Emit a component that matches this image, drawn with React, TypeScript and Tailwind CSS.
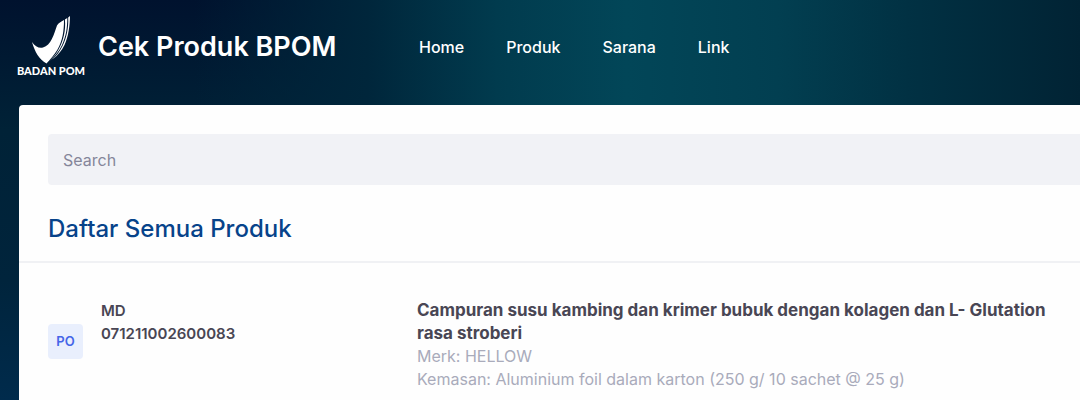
const links = ["Home", "Produk", "Sarana", "Link"];

const products = [
  {
    code: "PO",
    type: "MD",
    number: "071211002600083",
    name: "Campuran susu kambing dan krimer bubuk dengan kolagen dan L- Glutation rasa stroberi",
    brand: "HELLOW",
    packaging: "Aluminium foil dalam karton (250 g/ 10 sachet @ 25 g)",
  },
];

function Logo() {
  return (
    <div className="flex w-16 flex-col items-center">
      <svg viewBox="0 0 40 48" className="h-12 w-10" fill="#fff" aria-hidden="true">
        <path d="M1 26C4 30.500 8 32.500 12 31.500C20 29.500 23 18 26 9.500C27.500 7 30 5.500 33 4C33 15 31.500 25 26.500 33.500C23 39.500 19.500 43 15.500 47.500C8 43.500 4 36 1 26Z" />
        <path d="M33.900 3.500C35 14 32.500 25 27.500 33.500C24.500 39 21.500 42 18 45.500C23.500 41 27.800 35.500 30.800 29.500C35 20.500 36.300 12 36.300 2Z" />
        <path d="M37.200 1.500C37.700 12 35.500 22 31.500 30C28.500 36 25.500 39.500 21.500 43.500C27 39 30.500 35 33.500 29C37.500 20.500 38.800 10 39 0Z" />
      </svg>
      <span className="font-['Lato'] text-[11px] font-black leading-[14px] whitespace-nowrap">
        BADAN POM
      </span>
    </div>
  );
}

function Header() {
  return (
    <header className="flex items-center pt-4 pb-[27px] pl-[19px] text-white">
      <Logo />
      <h1 className="ml-[15px] w-[321px] text-[27px] font-semibold whitespace-nowrap">
        Cek Produk BPOM
      </h1>
      <nav className="flex gap-[42px] text-base font-medium">
        {links.map((link) => (
          <a key={link} href="#">
            {link}
          </a>
        ))}
      </nav>
    </header>
  );
}

function ProductTable() {
  return (
    <table className="mt-9 w-full table-fixed leading-[23px]">
      <colgroup>
        <col className="w-[82px]" />
        <col className="w-[316px]" />
        <col />
      </colgroup>
      <tbody>
        {products.map((product) => (
          <tr key={product.number}>
            <td className="pb-2 pl-[29px]">
              <div className="flex size-[35px] items-center justify-center rounded bg-[#e9effd] text-[13px] font-semibold text-[#4565e8]">
                {product.code}
              </div>
            </td>
            <td className="align-top text-[15px] font-semibold text-[#494654]">
              <p>{product.type}</p>
              <p>{product.number}</p>
            </td>
            <td className="pr-3 align-top text-base leading-[23px] text-[#a9abbb]">
              <p className="text-[17px] leading-[23px] font-bold text-[#494654]">{product.name}</p>
              <p>Merk: {product.brand}</p>
              <p>Kemasan: {product.packaging}</p>
            </td>
          </tr>
        ))}
      </tbody>
    </table>
  );
}

export default function App() {
  return (
    <div className="min-h-screen bg-[#00263b] bg-[linear-gradient(to_right,transparent_18%,#00263b_34%,#013b4e_46%,#024658_58%,#023f51_72%,#013143_84%,#012334_100%),linear-gradient(to_bottom,#00122e_0px,#002237_130px,#00243c_280px,#002b4c_400px)] font-['Inter',sans-serif]">
      <Header />
      <main className="ml-[19px] min-h-[295px] rounded-tl bg-[#fefefe]">
        <div className="pt-[29px] pl-[29px]">
          <input
            type="search"
            aria-label="Search"
            placeholder="Search"
            className="block h-[51px] w-full rounded-l bg-[#f1f2f6] px-[15px] text-base outline-none placeholder:text-[#85869a]"
          />
        </div>
        <h2 className="mt-7 border-b-2 border-[#f0f1f4] pb-4 pl-[29px] text-2xl leading-8 font-medium text-[#07438a]">
          Daftar Semua Produk
        </h2>
        <ProductTable />
      </main>
    </div>
  );
}
